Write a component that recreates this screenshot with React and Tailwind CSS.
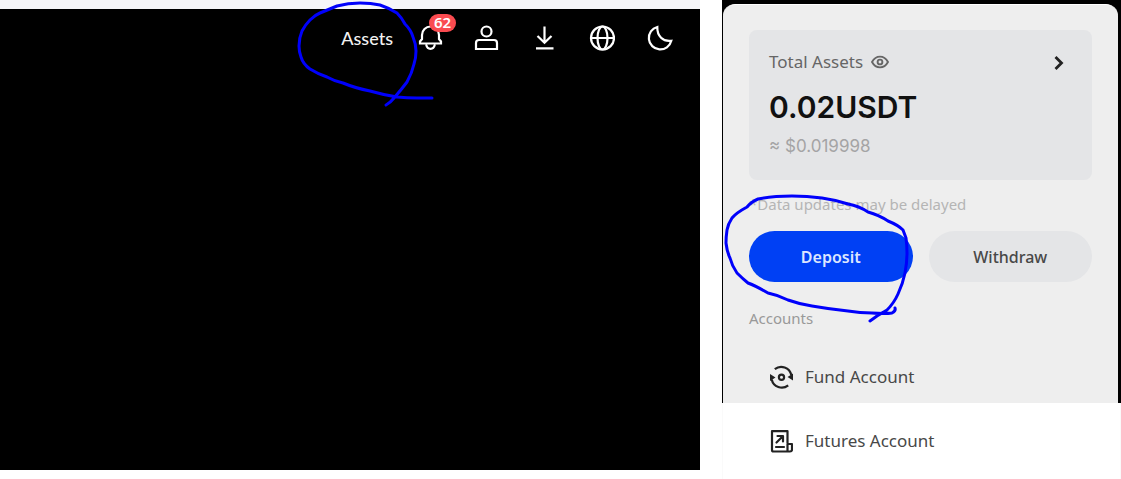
import React from "react";

const icon = {
  fill: "none",
  stroke: "currentColor",
  strokeWidth: 2.2,
  strokeLinecap: "round",
  strokeLinejoin: "round",
  "aria-hidden": true,
};

function BellIcon() {
  return (
    <svg viewBox="0 0 26 26" className="size-[26px]" {...icon}>
      <path d="M3 18.500v-2l2-2.500V10a8.500 8.500 0 0 1 17 0v4l2 2.500v2z" strokeLinejoin="miter" />
      <path d="M9.300 20c.6 2.700 2 3.800 4.200 3.800s3.600-1.100 4.200-3.800" />
    </svg>
  );
}

function UserIcon() {
  return (
    <svg viewBox="0 0 26 26" className="size-[26px]" {...icon}>
      <circle cx="13.500" cy="6.500" r="5" />
      <path d="M6 15h15a3 3 0 0 1 3 3v6H3v-6a3 3 0 0 1 3-3z" strokeLinejoin="miter" />
    </svg>
  );
}

function DownloadIcon() {
  return (
    <svg viewBox="0 0 26 26" className="size-[26px]" {...icon} strokeLinecap="butt">
      <path d="M13.500 1.500v16.500M6.500 11l7 6.800 7-6.800M5 23.300h17.500" strokeLinejoin="miter" />
    </svg>
  );
}

function GlobeIcon() {
  return (
    <svg viewBox="0 0 26 26" className="size-[26px]" {...icon}>
      <circle cx="13.500" cy="13" r="11.500" />
      <ellipse cx="13.500" cy="13" rx="5" ry="11.500" />
      <path d="M2 13h23" />
    </svg>
  );
}

function MoonIcon() {
  return (
    <svg viewBox="0 0 26 26" className="size-[26px]" {...icon}>
      <path d="M10.300 2A11.400 11.400 0 1 0 24.300 15.800C16 17 10 11 10.300 2z" strokeLinejoin="miter" />
    </svg>
  );
}

function EyeIcon() {
  return (
    <svg viewBox="0 0 18 14" className="h-[14px] w-[18px]" {...icon} strokeWidth="1.900">
      <path d="M1 7c2-3.600 4.700-5.400 8-5.400S15 3.400 17 7c-2 3.600-4.700 5.400-8 5.400S3 10.600 1 7z" />
      <circle cx="9" cy="7" r="2.400" />
    </svg>
  );
}

function FundIcon() {
  return (
    <svg viewBox="0 0 24 24" className="size-6 shrink-0" {...icon} strokeLinecap="butt">
      <path d="M5.800 4.200A10.300 10.300 0 0 1 22.300 10M19.200 20.300A10.300 10.300 0 0 1 2.700 14.500" />
      <path d="M24 8.500v7l-5.500-3.600zM1 16v-7l5.500 3.600z" fill="currentColor" stroke="none" />
      <circle cx="12.500" cy="12.300" r="2.600" />
    </svg>
  );
}

function FuturesIcon() {
  return (
    <svg viewBox="0 0 24 24" className="size-6 shrink-0" {...icon}>
      <path d="M18.500 14V2.200H3V21a1.500 1.500 0 0 0 1.500 1.500h16.500a2 2 0 0 0 2-2v-5.500h-4.500v7" />
      <path d="M7 18h8M7.500 13.500l6-6M8.500 7h5.500v5.500" />
    </svg>
  );
}

function PenLoop({ className, viewBox, d }) {
  return (
    <svg
      viewBox={viewBox}
      className={className}
      fill="none"
      stroke="#0000fb"
      strokeWidth="3"
      strokeLinecap="round"
      strokeLinejoin="round"
      aria-hidden="true"
    >
      <path d={d} />
    </svg>
  );
}

const assetsLoop =
  "M432 98L417 98Q407 98 397 97Q384 95 370 91Q355 88 343 83Q334 81 327 77Q318 74 310 69Q303 64 301 57Q299 52 299 46Q299 38 302 31Q305 25 310 20Q315 15 320 13L337 6Q348 3 360 3Q371 3 380 5Q389 8 397 13Q402 18 405 24Q411 30 413 37Q416 44 416 51Q416 58 414 64Q412 73 407 82Q401 90 394 98Q390 103 386 105";

const depositLoop =
  "M870 321L877 316L887 310Q894 303 898 294Q903 283 905 273Q907 263 907 253Q907 245 906 238L903 230Q898 225 888 221Q879 215 868 212Q859 206 848 204Q836 200 822 198Q807 196 792 196Q773 196 758 199Q751 202 747 207Q736 213 732 218Q728 224 727 230Q726 237 726 243Q727 252 730 258Q732 266 737 273Q743 279 748 283Q756 286 768 293Q778 295 788 300Q799 304 812 306Q829 309 848 311Q860 313 872 313Q885 314 892 313Q896 311 895 308";

const tools = [
  { label: "Profile", Icon: UserIcon },
  { label: "Download", Icon: DownloadIcon },
  { label: "Language", Icon: GlobeIcon },
  { label: "Dark mode", Icon: MoonIcon },
];

function AccountLink({ Icon, children }) {
  return (
    <a href="#account" className="flex h-16 items-center gap-3 pl-5 text-[17px] text-[#484848]">
      <span className="text-[#222]"><Icon /></span>
      {children}
    </a>
  );
}

export default function App() {
  return (
    <main className="flex items-start gap-[22px] overflow-hidden bg-white font-['Noto_Sans',sans-serif]">
      <section className="min-w-0 flex-1 border-t-[9px] border-[#f6f6f9] bg-black pb-[404px] text-white">
        <nav className="flex h-[57px] items-center justify-end gap-8 pr-[27px]">
          <a href="#assets" className="relative -mr-2 font-['Lato',sans-serif] text-lg font-medium text-[#f2f2f2]">
            Assets
            <PenLoop
              className="pointer-events-none absolute -top-6 -left-[44px] h-[110px] w-[140px] max-w-none"
              viewBox="297 0 140 110"
              d={assetsLoop}
            />
          </a>
          <button type="button" aria-label="Notifications" className="relative -mr-0.5">
            <BellIcon />
            <span className="absolute -top-[11px] left-3 flex h-[18px] w-[27px] items-center justify-center rounded-full bg-[#fa4b50] text-[15px] font-semibold">
              62
            </span>
          </button>
          {tools.map(({ label, Icon }) => (
            <button type="button" aria-label={label} key={label}>
              <Icon />
            </button>
          ))}
        </nav>
      </section>

      <aside className="w-[36%] max-w-[399px] shrink-0">
        <div className="bg-black pt-1 pr-[3px] pl-px">
          <div className="rounded-t-xl border-t border-white bg-[#eee] px-[26px] pt-[25px]">
            <div className="flex h-[150px] flex-col rounded-lg bg-[#e4e5e7] px-5 pt-5">
              <div className="flex h-6 items-center justify-between">
                <div className="flex items-center gap-2 text-[17px] text-[#666]">
                  Total Assets
                  <button type="button" aria-label="Hide balance"><EyeIcon /></button>
                </div>
                <a href="#total" aria-label="Asset details" className="mr-2 pt-0.5 text-[#222]">
                  <svg viewBox="0 0 10 14" className="h-[14px] w-[10px]" {...icon} strokeWidth="2.800" strokeLinecap="butt" strokeLinejoin="miter">
                    <path d="M1.500 1l6 6-6 6" />
                  </svg>
                </a>
              </div>
              <p className="mt-[13px] font-['Inter',sans-serif] text-3xl leading-10 font-semibold text-[#111]">0.02USDT</p>
              <p className="mt-[7px] font-['Inter',sans-serif] text-[17px] leading-6 text-[#a4a4a5]">≈ $0.019998</p>
            </div>

            <p className="mt-3 text-[15px] leading-6 text-[#b5b5b5]">*Data updates may be delayed</p>

            <div className="mt-[15px] flex gap-4 text-base font-medium">
              <div className="relative flex-1">
                <button type="button" className="h-[51px] w-full rounded-full bg-[#0040f4] font-semibold text-[#dce6ff]">
                  Deposit
                </button>
                <PenLoop
                  className="pointer-events-none absolute -top-[37px] -left-[25px] h-[130px] w-[190px] max-w-none"
                  viewBox="724 194 190 130"
                  d={depositLoop}
                />
              </div>
              <button type="button" className="h-[51px] flex-1 rounded-full bg-[#e4e5e7] text-[#484848]">
                Withdraw
              </button>
            </div>

            <h2 className="mt-6 text-[15px] leading-6 text-[#999]">Accounts</h2>
            <div className="mt-[15px] h-[58px]">
              <AccountLink Icon={FundIcon}>Fund Account</AccountLink>
            </div>
          </div>
        </div>
        <div className="border-x border-[#fafafa] bg-white px-[26px] pt-[6px] pb-[6px]">
          <AccountLink Icon={FuturesIcon}>Futures Account</AccountLink>
        </div>
      </aside>
    </main>
  );
}
